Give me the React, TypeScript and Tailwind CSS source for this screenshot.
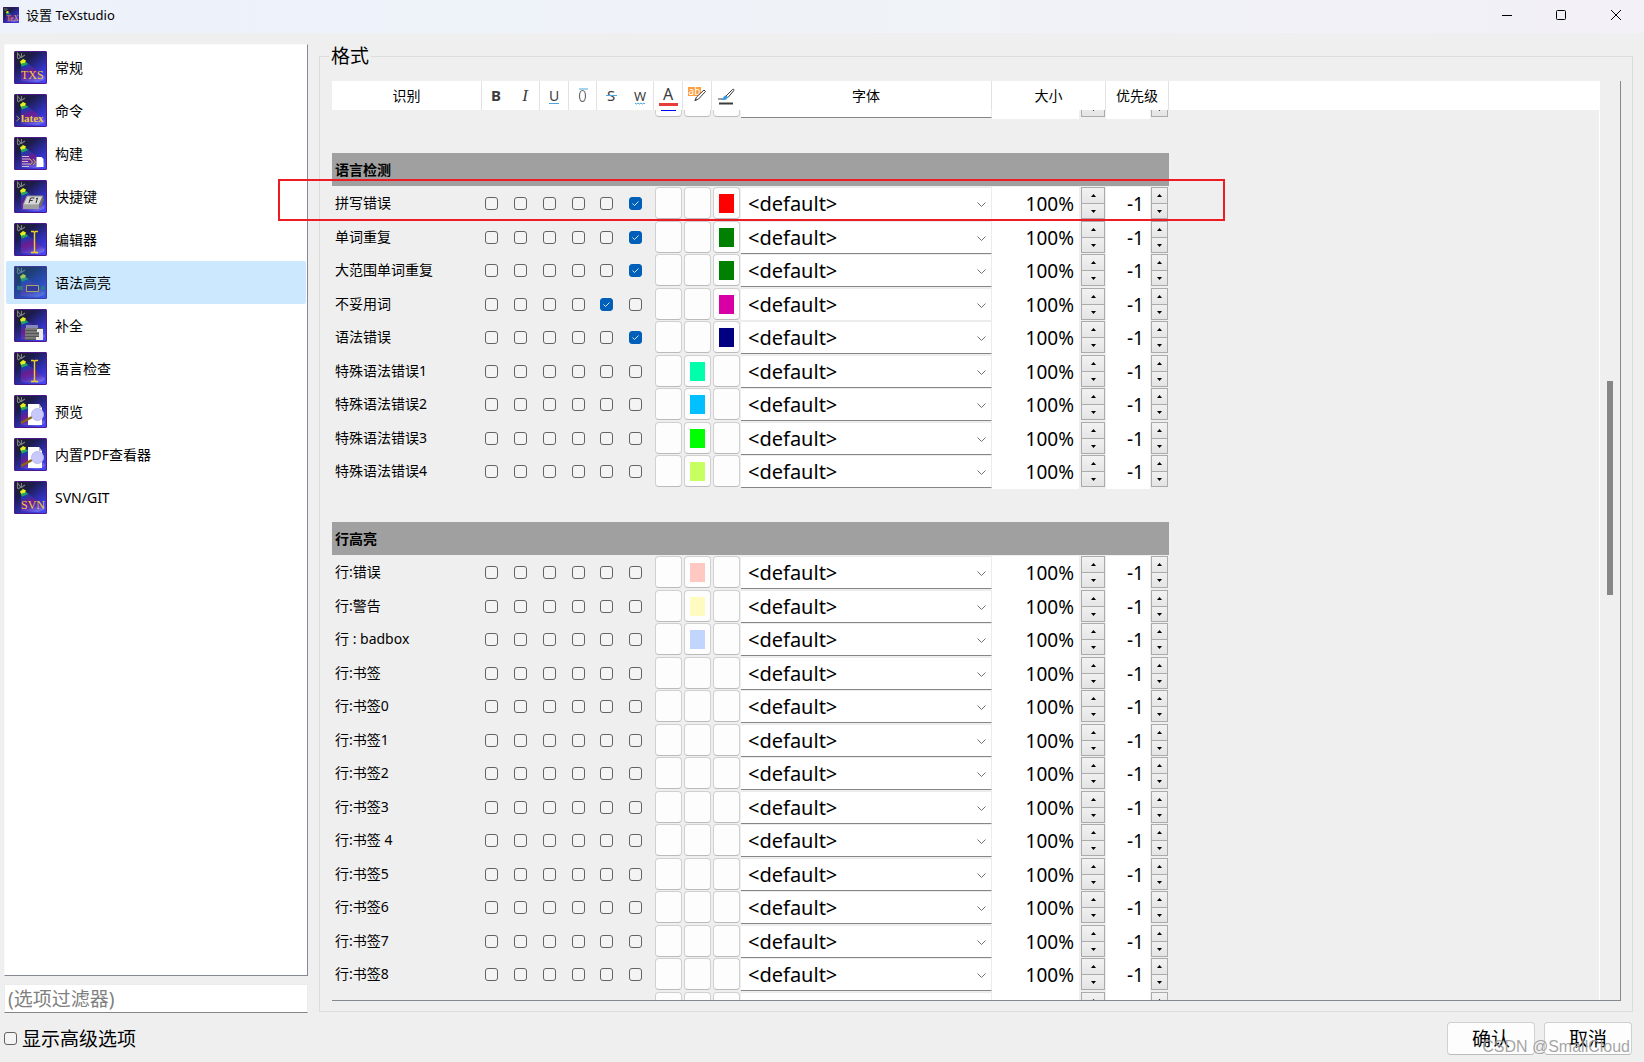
import { Fragment } from "react";
import type { ReactNode } from "react";

type Row = {
  label: string;
  checked?: number;
  swatches?: [string?, string?, string?];
  softLine?: boolean;
};

type Section = { title: string; rows: Row[] };

const STYLES = ["粗体", "斜体", "下划线", "上划线", "删除线", "波浪线"];
const COLORS = ["前景色", "背景色", "线条颜色"];

const SECTIONS: Section[] = [
  {
    title: "语言检测",
    rows: [
      { label: "拼写错误", checked: 5, swatches: ["", "", "bg-[#ff0000]"] },
      { label: "单词重复", checked: 5, swatches: ["", "", "bg-[#008000]"] },
      { label: "大范围单词重复", checked: 5, swatches: ["", "", "bg-[#008000]"] },
      {
        label: "不妥用词",
        checked: 4,
        swatches: ["", "", "bg-[#d800a4]"],
        softLine: true,
      },
      { label: "语法错误", checked: 5, swatches: ["", "", "bg-[#000080]"] },
      { label: "特殊语法错误1", swatches: ["", "bg-[#00ffaa]"] },
      { label: "特殊语法错误2", swatches: ["", "bg-[#00c0ff]"] },
      { label: "特殊语法错误3", swatches: ["", "bg-[#00ff00]"] },
      { label: "特殊语法错误4", swatches: ["", "bg-[#c8ff60]"] },
    ],
  },
  {
    title: "行高亮",
    rows: [
      { label: "行:错误", swatches: ["", "bg-[#ffc8c0]"] },
      { label: "行:警告", swatches: ["", "bg-[#fffac0]"] },
      { label: "行 : badbox", swatches: ["", "bg-[#c0d6ff]"] },
      { label: "行:书签" },
      { label: "行:书签0" },
      { label: "行:书签1" },
      { label: "行:书签2" },
      { label: "行:书签3" },
      { label: "行:书签 4" },
      { label: "行:书签5" },
      { label: "行:书签6" },
      { label: "行:书签7" },
      { label: "行:书签8" },
      { label: "行:书签9" },
    ],
  },
];

const Magnifier = () => (
  <>
    <path d="M14 9h11l3 4v17H14z" fill="#fff" />
    <path d="M25 9l3 4h-3z" fill="#b4b4c4" />
    <path d="M7 28l11-6" stroke="#8a6410" strokeWidth="2.4" />
    <circle cx="23.5" cy="19.5" r="6" fill="#c8c8fa" stroke="#b8b8f0" />
  </>
);

const Cursor = () => (
  <path
    d="M17 8.5h2.5l1 1 1-1H24M17 29.5h2.5l1-1 1 1H24M20.5 9v20"
    fill="none"
    stroke="#f0d020"
    strokeWidth="1.4"
  />
);

const PAGES: { name: string; art: ReactNode; active?: boolean }[] = [
  {
    name: "常规",
    art: (
      <text
        x="7"
        y="28"
        fontSize="12"
        fill="#eccb3c"
        className="font-['Liberation_Serif',serif]"
      >
        TXS
      </text>
    ),
  },
  {
    name: "命令",
    art: (
      <>
        <path d="M2.5 22l3 2.5-3 2.5" fill="none" stroke="#b8a060" />
        <text
          x="7"
          y="28"
          fontSize="11"
          fontWeight="bold"
          fill="#eccb3c"
          className="font-['Liberation_Serif',serif]"
        >
          latex
        </text>
      </>
    ),
  },
  {
    name: "构建",
    art: (
      <>
        <path
          d="M8 19.5h7M8 22h8M8 24.5h6M8 27h8M8 29.5h7"
          stroke="#c4c4d4"
          strokeWidth="1.2"
        />
        <path
          d="M16 22l2.5 3-2.500 3M19 22l2.5 3-2.5 3"
          fill="none"
          stroke="#d8b830"
        />
        <path d="M22.5 20h5l2 2v8h-7z" fill="#fff" />
      </>
    ),
  },
  {
    name: "快捷键",
    art: (
      <>
        <path d="M13 16h16l-4 9H9z" fill="#d8d8d8" stroke="#8c8c8c" />
        <path d="M9 25h16v4H9z" fill="#a0a0a0" />
        <path d="M25 25l4-9 1 4-4 8z" fill="#6c6c6c" />
        <path
          d="M15 23l1.5-5h4M15.7 20.5h3M22 19l1.5-1-1.5 5"
          fill="none"
          stroke="#333"
        />
      </>
    ),
  },
  { name: "编辑器", art: <Cursor /> },
  {
    name: "语法高亮",
    active: true,
    art: (
      <>
        <path d="M3 20h6v4H3zM27 20h4v4h-4z" fill="#34706c" />
        <path d="M12.5 19.5h12v6h-12z" fill="#401484" stroke="#e0c040" />
      </>
    ),
  },
  {
    name: "补全",
    art: (
      <>
        <path d="M12 16h12v3H12z" fill="#8888b8" />
        <path d="M11 19h18v12H11z" fill="#555" />
        <path
          d="M11 20h12M11 23h17M11 26h17M11 29h17"
          stroke="#a0a0a0"
          strokeWidth="1.2"
        />
        <path d="M23 20h6v11h-7v-3h3v-5h-2z" fill="#e8e8e8" />
      </>
    ),
  },
  { name: "语言检查", art: <Cursor /> },
  { name: "预览", art: <Magnifier /> },
  { name: "内置PDF查看器", art: <Magnifier /> },
  {
    name: "SVN/GIT",
    art: (
      <text
        x="7"
        y="28"
        fontSize="12"
        fill="#eccb3c"
        className="font-['Liberation_Serif',serif]"
      >
        SVN
      </text>
    ),
  },
];

const PageIcon = ({
  children,
  className,
}: {
  children: ReactNode;
  className: string;
}) => (
  <svg viewBox="0 0 33 33" className={className} aria-hidden="true">
    <rect width="33" height="33" rx="1.5" fill="url(#tile)" />
    <path d="M7 13l5-2 19 15-1 3-6 2-17-1z" fill="url(#beam)" />
    <rect
      x=".5"
      y=".5"
      width="32"
      height="32"
      rx="1.5"
      fill="none"
      stroke="#4c188c"
    />
    <path
      d="M3.5 7.5V2l4 5V2M4 8l3-2M8 6l3-2"
      fill="none"
      stroke="#7c7c84"
      strokeWidth="1.1"
    />
    <path d="M5 10l2-3 4 0 1 3-3 2H6z" fill="#20242c" />
    <path d="M6 10.5l3-2.500 3 1.5-1 2.500-4 1z" fill="#e0f020" />
    <path d="M7 13l5-1.5 2 1.5-6 2.500z" fill="#28b050" opacity=".9" />
    {children}
  </svg>
);

const IconDefs = () => (
  <svg className="absolute size-0" aria-hidden="true">
    <defs>
      <linearGradient id="tile" x1=".1" y1="0" x2=".9" y2="1">
        <stop offset="0" stopColor="#202024" />
        <stop offset=".3" stopColor="#1c1c4c" />
        <stop offset=".65" stopColor="#3030b8" />
        <stop offset="1" stopColor="#4848ff" />
      </linearGradient>
      <linearGradient id="beam" x1=".1" y1="0" x2=".5" y2="1">
        <stop offset="0" stopColor="#188c80" />
        <stop offset=".2" stopColor="#2038b0" />
        <stop offset=".5" stopColor="#6c1c90" />
        <stop offset=".75" stopColor="#5c30b0" />
        <stop offset="1" stopColor="#6c68e8" />
      </linearGradient>
    </defs>
  </svg>
);

const HeadIcon = ({
  label,
  children,
}: {
  label: string;
  children: ReactNode;
}) => (
  <svg
    viewBox="0 0 28 28"
    className="mx-auto size-7"
    role="img"
    aria-label={label}
  >
    {children}
  </svg>
);

const Check = ({ label, on }: { label: string; on?: boolean }) => (
  <span className="relative block size-[13px]">
    <input
      type="checkbox"
      aria-label={label}
      defaultChecked={on}
      className="peer block size-[13px] appearance-none rounded-[3px] border border-[#636363] bg-[#f4f4f4] checked:border-[#005fb8] checked:bg-[#005fb8]"
    />
    <svg
      viewBox="0 0 13 13"
      className="pointer-events-none absolute inset-0 hidden size-[13px] peer-checked:block"
      aria-hidden="true"
    >
      <path d="M3.5 6.5l2 2 4-4" fill="none" stroke="#d8e8f8" />
    </svg>
  </span>
);

const Spin = ({ label, className }: { label: string; className: string }) => (
  <span className={`flex h-8 flex-col border border-[#ababab] ${className}`}>
    <button
      type="button"
      aria-label={`${label} 增加`}
      className="flex h-4 items-center justify-center border-b border-[#ababab] bg-linear-to-b from-[#f2f2f2] to-[#e6e6e6]"
    >
      <svg viewBox="0 0 5 3" className="h-[3px] w-[5px]" aria-hidden="true">
        <path d="M0 3l2.500-3L5 3z" />
      </svg>
    </button>
    <button
      type="button"
      aria-label={`${label} 减少`}
      className="flex flex-1 items-center justify-center bg-linear-to-b from-[#f0f0f0] to-[#e4e4e4]"
    >
      <svg viewBox="0 0 5 3" className="h-[3px] w-[5px]" aria-hidden="true">
        <path d="M0 0l2.500 3L5 0z" />
      </svg>
    </button>
  </span>
);

const Columns = () => (
  <colgroup>
    <col className="w-[150px]" />
    <col className="w-[29px]" />
    <col className="w-[29px]" />
    <col className="w-[29px]" />
    <col className="w-[28px]" />
    <col className="w-[29px]" />
    <col className="w-[28px]" />
    <col className="w-[29px]" />
    <col className="w-[29px]" />
    <col className="w-[29px]" />
    <col className="w-[251px]" />
    <col className="w-[114px]" />
    <col className="w-[63px]" />
  </colgroup>
);

const FormatRow = ({ row, tall }: { row: Row; tall: boolean }) => {
  const { label, checked, swatches = [], softLine } = row;

  return (
    <tr className={tall ? "h-[34px]" : "h-[33px]"}>
      <th
        scope="row"
        className="pl-[3px] text-left text-sm leading-8 font-normal whitespace-nowrap"
      >
        {label}
      </th>
      {STYLES.map((style, i) => (
        <td key={style} className="pt-[10px] pl-[3px]">
          <Check label={`${label} ${style}`} on={checked === i} />
        </td>
      ))}
      {COLORS.map((color, i) => (
        <td key={color}>
          <button
            type="button"
            aria-label={`${label} ${color}`}
            className="mx-px flex h-8 w-[27px] items-center justify-center rounded-[4px] border border-[#d0d0d0] border-b-[#bbbbbb] bg-[#fdfdfd]"
          >
            {swatches[i] && (
              <span className={`h-[19px] w-[15px] ${swatches[i]}`} />
            )}
          </button>
        </td>
      ))}
      <td>
        <span className="relative block">
          <select
            aria-label={`${label} 字体`}
            className={`block h-[33px] w-full appearance-none border border-l-0 border-[#ececec] bg-white pl-[7px] text-xl leading-7 ${
              softLine ? "" : "border-b-[#868686]"
            }`}
          >
            <option>&lt;default&gt;</option>
          </select>
          <svg
            viewBox="0 0 9 5"
            className="pointer-events-none absolute top-[15px] right-[6px] h-[5px] w-[9px]"
            aria-hidden="true"
          >
            <path d="M.5.5l4 4 4-4" fill="none" stroke="#707070" />
          </svg>
        </span>
      </td>
      <td>
        <span className="flex">
          <input
            aria-label={`${label} 大小`}
            defaultValue="100%"
            className={`w-[87px] bg-white pr-[5px] text-right text-[19px] leading-7 ${
              tall ? "h-[34px]" : "h-[33px]"
            }`}
          />
          <Spin label={`${label} 大小`} className="ml-[2px] w-6" />
        </span>
      </td>
      <td>
        <span className="flex">
          <input
            aria-label={`${label} 优先级`}
            defaultValue="-1"
            className={`w-[44px] bg-white pr-[6px] text-right text-[19px] leading-7 ${
              tall ? "h-[34px]" : "h-[33px]"
            }`}
          />
          <Spin label={`${label} 优先级`} className="ml-px w-[17px]" />
        </span>
      </td>
    </tr>
  );
};

const HeaderTable = () => (
  <div className="bg-white">
    <table className="w-[837px] table-fixed border-separate border-spacing-0">
      <Columns />
      <thead>
        <tr className="h-[29px] text-sm [&>th]:border-r [&>th]:border-[#e2e2e2] [&>th]:p-0 [&>th]:font-normal">
          <th scope="col">识别</th>
          <th scope="col" className="border-r-white!">
            <HeadIcon label="粗体">
              <text
                x="14"
                y="19"
                fontSize="15"
                fontWeight="bold"
                textAnchor="middle"
                fill="#3c3c3c"
              >
                B
              </text>
            </HeadIcon>
          </th>
          <th scope="col">
            <HeadIcon label="斜体">
              <text
                x="14"
                y="19"
                fontSize="17"
                fontStyle="italic"
                textAnchor="middle"
                fill="#3c3c3c"
                className="font-['Liberation_Serif',serif]"
              >
                I
              </text>
            </HeadIcon>
          </th>
          <th scope="col">
            <HeadIcon label="下划线">
              <text x="14" y="19" fontSize="14" textAnchor="middle" fill="#3c3c3c">
                U
              </text>
              <path d="M9 21.5h10" stroke="#4ca6dc" />
            </HeadIcon>
          </th>
          <th scope="col">
            <HeadIcon label="上划线">
              <ellipse
                cx="13.5"
                cy="14"
                rx="3"
                ry="5.5"
                fill="none"
                stroke="#666"
                strokeWidth="1.2"
              />
              <path d="M10 7h9" stroke="#4ca6dc" />
            </HeadIcon>
          </th>
          <th scope="col" className="border-r-white!">
            <HeadIcon label="删除线">
              <text x="14" y="19" fontSize="15" textAnchor="middle" fill="#3c3c3c">
                S
              </text>
              <path d="M9 13.5h11" stroke="#4ca6dc" />
            </HeadIcon>
          </th>
          <th scope="col">
            <HeadIcon label="波浪线">
              <text x="14" y="19" fontSize="13" textAnchor="middle" fill="#3c3c3c">
                W
              </text>
              <path
                d="M9 21l1.2 1.2L12 21l1.2 1.2L15 21l1.2 1.2L18 21l1 1"
                fill="none"
                stroke="#4ca6dc"
              />
            </HeadIcon>
          </th>
          <th scope="col">
            <HeadIcon label="前景色">
              <text x="14" y="18" fontSize="16" textAnchor="middle" fill="#3c3c3c">
                A
              </text>
              <path d="M5 22.500h19" stroke="#e83c3c" strokeWidth="3" />
            </HeadIcon>
          </th>
          <th scope="col">
            <HeadIcon label="背景色">
              <path d="M5 5h13v9H5z" fill="#ff9c3c" />
              <text x="11.5" y="13" fontSize="10" textAnchor="middle" fill="#fff">
                ab
              </text>
              <path
                d="M12 18.500l1.500-3.500 7.500-7 1.500 1.500-7 7.500z"
                fill="#fff"
                stroke="#3c3c3c"
              />
              <path d="M11.500 19l1-2.500 1.500 1.500z" fill="#3c3c3c" />
            </HeadIcon>
          </th>
          <th scope="col" className="border-r-white!">
            <HeadIcon label="线条颜色">
              <path
                d="M14 14l6.5-6.5c1-.8 2 .2 1.2 1.2L16 15.5"
                fill="#fff"
                stroke="#3c3c3c"
              />
              <path
                d="M10 17c2 0 1.5-3.5 4-3 2.5.5 2 4-4 3.5z"
                fill="#3c98dc"
                stroke="#3c98dc"
              />
              <path d="M6 17h4" stroke="#3c3c3c" />
              <path d="M7 21.5h14" stroke="#3c3c3c" strokeWidth="2" />
            </HeadIcon>
          </th>
          <th scope="col">字体</th>
          <th scope="col">大小</th>
          <th scope="col">优先级</th>
        </tr>
      </thead>
    </table>
  </div>
);

const FormatTable = () => (
  <table className="-mt-[25px] w-[837px] table-fixed border-separate border-spacing-0 [&_td]:align-top [&_th]:align-top">
    <Columns />
    <tbody>
      {/* tail of the previous section, scrolled under the header */}
      <FormatRow row={{ label: "", swatches: ["bg-[#0000ff]"] }} tall />
      {SECTIONS.map(({ title, rows }, s) => (
        <Fragment key={title}>
          <tr className={s === 0 ? "h-[34px]" : "h-[33px]"}>
            <td colSpan={13} />
          </tr>
          <tr className="h-[34px]">
            <th
              colSpan={13}
              scope="colgroup"
              className="border-b border-[#efefef] bg-[#a0a0a0] pl-[3px] text-left text-sm leading-[33px] font-bold"
            >
              {title}
            </th>
          </tr>
          {rows.map((row, i) => (
            <FormatRow key={row.label} row={row} tall={i % 2 === 0} />
          ))}
        </Fragment>
      ))}
    </tbody>
  </table>
);

const TitleBar = () => (
  <header className="flex h-[33px] shrink-0 bg-linear-to-r from-[#edf2fb] via-[#eff3f8] to-[#f3f0f7]">
    <h1 className="flex flex-1 items-center gap-[7px] pb-[3px] pl-[3px] text-[13px] leading-5">
      <PageIcon className="size-4">
        <text
          x="7"
          y="29"
          fontSize="15"
          fill="#e0a050"
          className="font-['Liberation_Serif',serif]"
        >
          TeX
        </text>
      </PageIcon>
      设置 TeXstudio
    </h1>
    <button
      type="button"
      aria-label="最小化"
      className="flex w-[55px] items-center justify-center pb-[3px]"
    >
      <svg viewBox="0 0 10 10" className="size-[10px]" aria-hidden="true">
        <path d="M0 5.5h10" stroke="#000" />
      </svg>
    </button>
    <button
      type="button"
      aria-label="最大化"
      className="flex w-[54px] items-center justify-center pb-[3px]"
    >
      <svg viewBox="0 0 10 10" className="size-[10px]" aria-hidden="true">
        <rect
          x=".5"
          y=".5"
          width="9"
          height="9"
          rx="1"
          fill="none"
          stroke="#000"
        />
      </svg>
    </button>
    <button
      type="button"
      aria-label="关闭"
      className="flex w-[56px] items-center justify-center pb-[3px]"
    >
      <svg viewBox="0 0 10 10" className="size-[10px]" aria-hidden="true">
        <path d="M0 0l10 10M10 0L0 10" stroke="#000" />
      </svg>
    </button>
  </header>
);

const Sidebar = () => (
  <aside className="flex w-[304px] shrink-0 flex-col gap-2">
    <nav className="min-h-0 flex-1 border border-t-[#fafafa] border-r-[#848890] border-b-[#848890] border-l-[#fafafa] bg-white px-px pt-px">
      <ul>
        {PAGES.map(({ name, art, active }) => (
          <li key={name}>
            <button
              type="button"
              className={`flex h-[43px] w-full items-center gap-2 rounded-[2px] pl-2 text-left text-sm ${
                active ? "bg-[#cce8ff]" : ""
              }`}
            >
              <span className="relative">
                <PageIcon className="size-[33px]">{art}</PageIcon>
                {active && (
                  <span className="absolute inset-0 rounded-[2px] bg-[#2080c0]/35" />
                )}
              </span>
              {name}
            </button>
          </li>
        ))}
      </ul>
    </nav>
    <input
      type="text"
      aria-label="选项过滤器"
      placeholder="(选项过滤器)"
      className="h-[29px] w-full border border-[#ececec] border-b-[#868686] bg-white pl-[3px] text-[19px] leading-7 placeholder:text-[#808080]"
    />
  </aside>
);

export default function App() {
  return (
    <div className="relative flex h-screen flex-col overflow-hidden bg-[#efefef] font-['Noto_Sans','Noto_Sans_CJK_SC',sans-serif] text-black">
      <IconDefs />
      <TitleBar />

      <main className="flex min-h-0 flex-1 gap-[11px] pt-[11px] pr-[11px] pl-1">
        <Sidebar />
        <fieldset className="mb-px flex min-w-0 flex-1 flex-col border border-[#dcdcdc] pt-[13px] pr-[11px] pb-[10px] pl-3">
          <legend className="-ml-[3px] px-[2px] text-[19px] leading-6">
            格式
          </legend>
          <div className="flex min-h-0 flex-1 border-r border-b border-[#848890]">
            <div className="flex min-w-0 flex-1 flex-col">
              <HeaderTable />
              <div className="min-h-0 flex-1 overflow-hidden border-r border-white">
                <FormatTable />
              </div>
            </div>
            <div className="w-5 pl-[7px]">
              <div className="mt-[300px] h-[214px] w-[6px] bg-[#868686]" />
            </div>
          </div>
        </fieldset>
      </main>

      <footer className="flex h-[49px] shrink-0 items-center justify-between pt-[2px] pr-3 pl-1">
        <label className="flex items-center gap-[5px] text-[19px] leading-7">
          <Check label="显示高级选项" />
          显示高级选项
        </label>
        <div className="flex gap-[9px]">
          <button
            type="button"
            className="h-[33px] w-[88px] rounded-[4px] border border-[#d0d0d0] border-b-[#bbbbbb] bg-[#fdfdfd] text-[19px] leading-6"
          >
            确认
          </button>
          <button
            type="button"
            className="h-[33px] w-[88px] rounded-[4px] border border-[#d0d0d0] border-b-[#bbbbbb] bg-[#fdfdfd] text-[19px] leading-6"
          >
            取消
          </button>
        </div>
      </footer>

      {/* call-out round the spelling row */}
      <div className="pointer-events-none absolute top-[179px] left-[278px] h-[42px] w-[947px] border-2 border-[#ed1c24]" />
      <p className="pointer-events-none absolute right-[14px] bottom-[3px] font-['Liberation_Sans',sans-serif] text-base leading-6 text-[#9a9a9a]/90">
        CSDN @SmallCloud
      </p>
    </div>
  );
}
